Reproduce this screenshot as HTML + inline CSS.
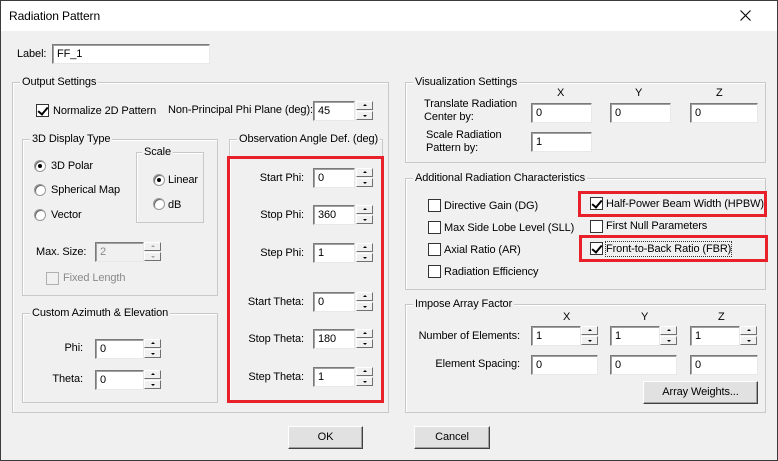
<!DOCTYPE html>
<html><head><meta charset="utf-8"><style>
*{box-sizing:border-box;margin:0;padding:0}
body{width:778px;height:461px;background:#f0f0f0;font-family:"Liberation Sans",sans-serif;font-size:11px;letter-spacing:-0.1px;color:#000;position:relative;overflow:hidden}
.win{position:absolute;left:0;top:0;width:778px;height:461px;border:1px solid #3c3c3c}
.title{position:absolute;left:1px;top:1px;width:776px;height:30px;background:#fff}
.a{position:absolute;white-space:nowrap;line-height:14px}
.g{position:absolute;border:1px solid #c8c8c8;box-shadow:inset 1px 1px 0 #fff}
.gt{position:absolute;top:-8px;left:7px;background:#f0f0f0;padding:0 2px;line-height:14px;white-space:nowrap}
.in{position:absolute;height:20px;background:#fff;border:1px solid;border-color:#7a7a7a #e8e8e8 #e8e8e8 #7a7a7a;box-shadow:inset 1px 1px 0 #a0a0a0;padding:2px 0 0 4px;line-height:14px}
.dis{background:#f0f0f0;color:#8a8a8a}
.sp{position:absolute;width:17px;height:20px}
.sp div{height:9px;margin-bottom:1px;background:#f0f0f0;border:1px solid;border-color:#fff #707070 #707070 #fff;position:relative}
.sp div:after{content:"";position:absolute;left:6px;top:2px;border-left:2px solid transparent;border-right:2px solid transparent}
.sp .u:after{border-bottom:2px solid #000}
.sp .d:after{border-top:2px solid #000;top:3px}
.sp.ds div:after{border-bottom-color:#a0a0a0;border-top-color:#a0a0a0}
.cb{position:absolute;width:13px;height:13px;background:#fff;border:1px solid #333}
.cb.on:after{content:"";position:absolute;left:3px;top:0px;width:4px;height:8px;border:solid #000;border-width:0 2px 2px 0;transform:rotate(40deg)}
.cb.dis{border-color:#b0b0b0;background:#f0f0f0}
.rd{position:absolute;width:12px;height:12px;border-radius:50%;background:#fff;border:1px solid #999;box-shadow:inset 1px 1px 0 #666}
.rd.on:after{content:"";position:absolute;left:3px;top:3px;width:4px;height:4px;border-radius:50%;background:#000}
.red{position:absolute;border:3px solid #e8202a}
.btn{position:absolute;height:23px;background:#e1e1e1;border:1px solid;border-color:#fff #404040 #404040 #fff;box-shadow:inset -1px -1px 0 #a0a0a0;text-align:center;line-height:20px}
.r{text-align:right}
</style></head><body>
<div class="win"></div>
<div class="title"></div>
<div class="a" style="left:9px;top:9px;font-size:12px">Radiation Pattern</div>
<svg style="position:absolute;left:740px;top:10px" width="11" height="11"><path d="M0.5 0.5L10.5 10.5M10.5 0.5L0.5 10.5" stroke="#000" stroke-width="1.1"/></svg>

<div class="a" style="left:17px;top:47px">Label:</div>
<div class="in" style="left:52px;top:44px;width:158px">FF_1</div>

<div class="g" style="left:12px;top:82px;width:377px;height:331px"><div class="gt">Output Settings</div></div>
<div class="cb on" style="left:36px;top:104px"></div>
<div class="a" style="left:53px;top:104px">Normalize 2D Pattern</div>
<div class="a" style="left:168px;top:103px">Non-Principal Phi Plane (deg):</div>
<div class="in" style="left:313px;top:101px;width:42px">45</div>
<div class="sp" style="left:356px;top:101px"><div class="u"></div><div class="d"></div></div>

<div class="g" style="left:22px;top:139px;width:196px;height:157px"><div class="gt">3D Display Type</div></div>
<div class="rd on" style="left:34px;top:160px"></div><div class="a" style="left:51px;top:159px">3D Polar</div>
<div class="rd" style="left:34px;top:184px"></div><div class="a" style="left:51px;top:183px">Spherical Map</div>
<div class="rd" style="left:34px;top:209px"></div><div class="a" style="left:51px;top:208px">Vector</div>
<div class="g" style="left:136px;top:152px;width:68px;height:71px"><div class="gt" style="left:5px">Scale</div></div>
<div class="rd on" style="left:153px;top:174px"></div><div class="a" style="left:168px;top:173px">Linear</div>
<div class="rd" style="left:153px;top:198px"></div><div class="a" style="left:168px;top:198px">dB</div>
<div class="a" style="left:36px;top:245px">Max. Size:</div>
<div class="in dis" style="left:95px;top:242px;width:49px">2</div>
<div class="sp ds" style="left:144px;top:242px"><div class="u"></div><div class="d"></div></div>
<div class="cb dis" style="left:46px;top:272px"></div>
<div class="a" style="left:63px;top:271px;color:#8a8a8a">Fixed Length</div>

<div class="g" style="left:22px;top:313px;width:196px;height:90px"><div class="gt">Custom Azimuth &amp; Elevation</div></div>
<div class="a r" style="left:40px;top:341px;width:43px">Phi:</div>
<div class="in" style="left:95px;top:339px;width:49px">0</div>
<div class="sp" style="left:144px;top:339px"><div class="u"></div><div class="d"></div></div>
<div class="a r" style="left:40px;top:372px;width:43px">Theta:</div>
<div class="in" style="left:95px;top:370px;width:49px">0</div>
<div class="sp" style="left:144px;top:370px"><div class="u"></div><div class="d"></div></div>

<div class="g" style="left:229px;top:139px;width:154px;height:262px"><div class="gt">Observation Angle Def. (deg)</div></div>
<div class="red" style="left:227px;top:156px;width:157px;height:247px"></div>
<div class="a r" style="left:230px;top:171px;width:74px">Start Phi:</div>
<div class="in" style="left:313px;top:168px;width:42px">0</div><div class="sp" style="left:356px;top:168px"><div class="u"></div><div class="d"></div></div>
<div class="a r" style="left:230px;top:208px;width:74px">Stop Phi:</div>
<div class="in" style="left:313px;top:205px;width:42px">360</div><div class="sp" style="left:356px;top:205px"><div class="u"></div><div class="d"></div></div>
<div class="a r" style="left:230px;top:246px;width:74px">Step Phi:</div>
<div class="in" style="left:313px;top:243px;width:42px">1</div><div class="sp" style="left:356px;top:243px"><div class="u"></div><div class="d"></div></div>
<div class="a r" style="left:230px;top:295px;width:74px">Start Theta:</div>
<div class="in" style="left:313px;top:292px;width:42px">0</div><div class="sp" style="left:356px;top:292px"><div class="u"></div><div class="d"></div></div>
<div class="a r" style="left:230px;top:332px;width:74px">Stop Theta:</div>
<div class="in" style="left:313px;top:329px;width:42px">180</div><div class="sp" style="left:356px;top:329px"><div class="u"></div><div class="d"></div></div>
<div class="a r" style="left:230px;top:370px;width:74px">Step Theta:</div>
<div class="in" style="left:313px;top:367px;width:42px">1</div><div class="sp" style="left:356px;top:367px"><div class="u"></div><div class="d"></div></div>

<div class="g" style="left:405px;top:82px;width:361px;height:81px"><div class="gt">Visualization Settings</div></div>
<div class="a" style="left:557px;top:86px">X</div><div class="a" style="left:635px;top:86px">Y</div><div class="a" style="left:716px;top:86px">Z</div>
<div class="a" style="left:424px;top:97px">Translate Radiation</div>
<div class="a" style="left:424px;top:110px">Center by:</div>
<div class="in" style="left:531px;top:103px;width:61px">0</div>
<div class="in" style="left:610px;top:103px;width:61px">0</div>
<div class="in" style="left:690px;top:103px;width:68px">0</div>
<div class="a" style="left:426px;top:128px">Scale Radiation</div>
<div class="a" style="left:426px;top:141px">Pattern by:</div>
<div class="in" style="left:531px;top:132px;width:61px">1</div>

<div class="g" style="left:405px;top:178px;width:361px;height:112px"><div class="gt">Additional Radiation Characteristics</div></div>
<div class="cb" style="left:428px;top:199px"></div><div class="a" style="left:444px;top:199px">Directive Gain (DG)</div>
<div class="cb" style="left:428px;top:221px"></div><div class="a" style="left:444px;top:221px">Max Side Lobe Level (SLL)</div>
<div class="cb" style="left:428px;top:243px"></div><div class="a" style="left:444px;top:243px">Axial Ratio (AR)</div>
<div class="cb" style="left:428px;top:265px"></div><div class="a" style="left:444px;top:265px">Radiation Efficiency</div>
<div class="cb on" style="left:590px;top:197px"></div><div class="a" style="left:606px;top:197px">Half-Power Beam Width (HPBW)</div>
<div class="cb" style="left:590px;top:220px"></div><div class="a" style="left:606px;top:219px">First Null Parameters</div>
<div class="cb on" style="left:590px;top:242px"></div><div class="a" style="left:606px;top:242px;outline:1px dotted #333">Front-to-Back Ratio (FBR)</div>
<div class="red" style="left:578px;top:191px;width:189px;height:26px"></div>
<div class="red" style="left:579px;top:235px;width:189px;height:27px"></div>

<div class="g" style="left:405px;top:304px;width:361px;height:109px"><div class="gt">Impose Array Factor</div></div>
<div class="a" style="left:563px;top:310px">X</div><div class="a" style="left:641px;top:310px">Y</div><div class="a" style="left:718px;top:310px">Z</div>
<div class="a r" style="left:410px;top:329px;width:110px">Number of Elements:</div>
<div class="in" style="left:531px;top:326px;width:50px">1</div><div class="sp" style="left:581px;top:326px"><div class="u"></div><div class="d"></div></div>
<div class="in" style="left:610px;top:326px;width:50px">1</div><div class="sp" style="left:660px;top:326px"><div class="u"></div><div class="d"></div></div>
<div class="in" style="left:690px;top:326px;width:50px">1</div><div class="sp" style="left:740px;top:326px"><div class="u"></div><div class="d"></div></div>
<div class="a r" style="left:410px;top:357px;width:110px">Element Spacing:</div>
<div class="in" style="left:531px;top:355px;width:67px">0</div>
<div class="in" style="left:610px;top:355px;width:67px">0</div>
<div class="in" style="left:690px;top:355px;width:68px">0</div>
<div class="btn" style="left:643px;top:381px;width:115px">Array Weights...</div>

<div class="btn" style="left:288px;top:426px;width:75px">OK</div>
<div class="btn" style="left:414px;top:426px;width:76px">Cancel</div>
</body></html>
